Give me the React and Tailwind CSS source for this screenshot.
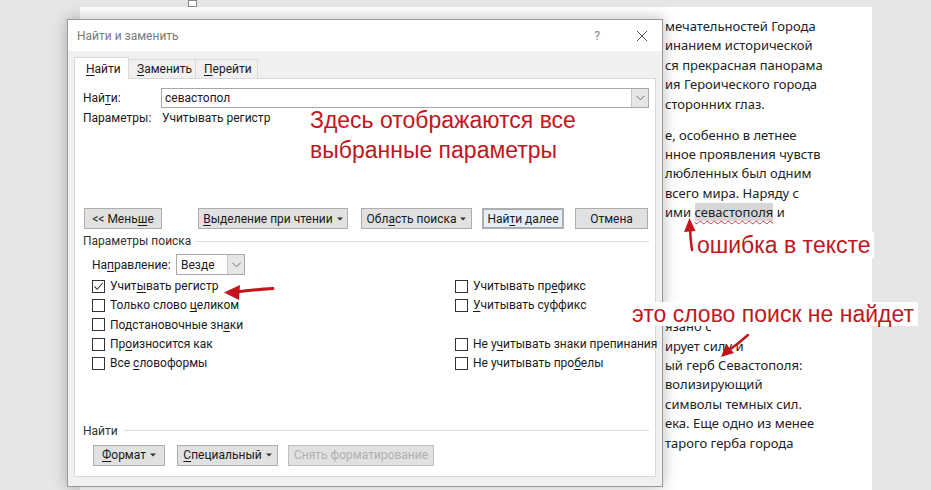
import React from "react";

// "&" marks the access-key letter that gets underlined
const K = ({ t }) => {
  const i = t.indexOf("&");
  if (i < 0) return t;
  return (
    <>
      {t.slice(0, i)}
      <span className="underline underline-offset-[2px] decoration-[1px]">{t[i + 1]}</span>
      {t.slice(i + 2)}
    </>
  );
};

const Caret = () => (
  <svg width="6" height="4" viewBox="0 0 6 4" className="ml-[4px]">
    <path d="M0 0.5 L6 0.5 L3 3.5 Z" fill="#333" />
  </svg>
);

const Chevron = () => (
  <svg width="9" height="6" viewBox="0 0 9 6">
    <path d="M0.5 0.8 L4.5 4.8 L8.5 0.8" fill="none" stroke="#6b6b6b" strokeWidth="1" />
  </svg>
);

const Btn = ({ children, className = "" }) => (
  <button
    className={`h-[21px] bg-[#e1e1e1] border border-[#adadad] text-[12px] text-[#1a1a1a] flex items-center justify-center shrink-0 whitespace-nowrap ${className}`}
  >
    {children}
  </button>
);

const Check = ({ label, checked }) => (
  <div className="h-[19.3px] flex items-center whitespace-nowrap">
    <div className="w-[13px] h-[13px] border border-[#333] bg-white flex items-center justify-center shrink-0">
      {checked && (
        <svg width="11" height="11" viewBox="0 0 11 11">
          <path d="M1.5 5.5 L4.2 8.3 L9.6 2" fill="none" stroke="#333" strokeWidth="1.1" />
        </svg>
      )}
    </div>
    <span className="ml-[5px]">
      <K t={label} />
    </span>
  </div>
);

const docText = [
  ["мечательностей Города", "инанием исторической", "ся прекрасная панорама", "ия Героического города", "сторонних глаз."],
  ["е, особенно в летнее", "нное проявления чувств", "люб­ленных был одним", "всего мира. Наряду с"],
];

const third = [
  "язано с",
  "ирует силу и",
  "ый герб Севастополя:",
  "волизирующий",
  "символы темных сил.",
  "ека. Еще одно из менее",
  "тарого герба города",
];

export default function App() {
  return (
    <div className="relative w-[931px] h-[490px] overflow-hidden bg-[#e6e6e6] font-['Noto_Sans',sans-serif]">
      {/* document page */}
      <div className="ml-[80px] mt-[7px] w-[792px] h-[483px] bg-white pl-[585px] pt-[10px] text-[13px] leading-[19.4px] text-[#222] whitespace-nowrap">
        {docText[0].map((l) => (
          <div key={l}>{l}</div>
        ))}
        <div className="mt-[11.6px]">
          {docText[1].map((l) => (
            <div key={l}>{l}</div>
          ))}
          <div>
            ими{" "}
            <span className="bg-[#d6d6d6] underline decoration-wavy decoration-[#e0303a] decoration-[1px] underline-offset-[3px]">
              севастополя
            </span>{" "}
            и
          </div>
        </div>
        <div className="mt-[94.6px]">
          {third.map((l) => (
            <div key={l}>{l}</div>
          ))}
        </div>
      </div>

      {/* sizing handle */}
      <div className="absolute left-[188px] top-0 w-[9px] h-[7px] border border-[#8a8a8a] bg-white" />

      {/* Find and replace dialog */}
      <div className="absolute left-[67px] top-[19px] w-[596px] h-[468px] bg-[#f0f0f0] border border-[#9a9a9a] shadow-[0_0_14px_rgba(0,0,0,0.28)] flex flex-col font-['Roboto',sans-serif] text-[12px] text-[#1a1a1a]">
        <div className="h-[31px] bg-white flex items-center pl-[9px] pr-[14px] shrink-0">
          <span className="text-[#7a7a7a]">Найти и заменить</span>
          <span className="ml-auto text-[#888] text-[12px]">?</span>
          <svg width="12" height="12" viewBox="0 0 12 12" className="ml-[36px]">
            <path d="M1 1 L11 11 M11 1 L1 11" stroke="#555" strokeWidth="1" />
          </svg>
        </div>

        <div className="flex-1 flex flex-col px-[6px] pt-[6px] pb-[9px]">
          {/* tabs */}
          <div className="flex items-end h-[22px] -mb-[1px] relative z-10">
            <div className="h-[22px] w-[55px] bg-white border border-b-0 border-[#d9d9d9] pl-[11px] flex items-center">
              <K t="&Найти" />
            </div>
            <div className="h-[20px] w-[67px] bg-[#f0f0f0] border border-l-0 border-[#d9d9d9] pl-[8px] flex items-center">
              <K t="&Заменить" />
            </div>
            <div className="h-[20px] w-[62px] bg-[#f0f0f0] border border-l-0 border-[#d9d9d9] pl-[8px] flex items-center">
              <K t="&Перейти" />
            </div>
          </div>

          {/* tab page */}
          <div className="flex-1 bg-white border border-[#d9d9d9] pl-[8px] pr-[6px] flex flex-col">
            <div className="mt-[9px] flex items-center h-[20px]">
              <span className="w-[78px]">
                <K t="Най&ти:" />
              </span>
              <div className="flex-1 h-[20px] border border-[#a8a8a8] flex items-center">
                <span className="pl-[3px] flex-1">севастопол</span>
                <div className="w-[17px] h-[18px] bg-[#e6e6e6] border-l border-[#c6c6c6] flex items-center justify-center">
                  <Chevron />
                </div>
              </div>
            </div>
            <div className="mt-[2px] h-[16px] flex items-center">
              <span className="w-[79px]">Параметры:</span>
              <span>Учитывать регистр</span>
            </div>

            <div className="mt-[82px] flex items-center">
              <Btn className="w-[78px] ml-[1px]">
                <K t="<< Мень&ше" />
              </Btn>
              <Btn className="w-[150px] ml-[36px]">
                <K t="&Выделение при чтении" />
                <Caret />
              </Btn>
              <Btn className="w-[111px] ml-[13px]">
                <K t="Обл&асть поиска" />
                <Caret />
              </Btn>
              <Btn className="w-[82px] ml-[10px] border-2 border-[#2a6fc0] bg-[#e5eef8]">
                <K t="Най&ти далее" />
              </Btn>
              <Btn className="w-[73px] ml-[11px]">Отмена</Btn>
            </div>

            <div className="mt-[4px] h-[16px] flex items-center">
              <span className="text-[#333]">Параметры поиска</span>
              <div className="flex-1 h-px bg-[#dcdcdc] ml-[4px]" />
            </div>

            <div className="pl-[9px]">
              <div className="mt-[5px] h-[21px] flex items-center">
                <span className="w-[84px]">
                  <K t="На&правление:" />
                </span>
                <div className="w-[69px] h-[21px] border border-[#a8a8a8] flex items-center">
                  <span className="flex-1 pl-[4px]">Везде</span>
                  <div className="w-[17px] h-[19px] bg-[#e6e6e6] border-l border-[#c6c6c6] flex items-center justify-center">
                    <Chevron />
                  </div>
                </div>
              </div>

              <div className="mt-[1.5px] grid grid-cols-[363px_1fr]">
                <div>
                  <Check label="Учит&ывать регистр" checked />
                  <Check label="Только слово &целиком" />
                  <Check label="Подстановочные зн&аки" />
                  <Check label="Пр&оизносится как" />
                  <Check label="Все &словоформы" />
                </div>
                <div>
                  <Check label="Учитывать пр&ефикс" />
                  <Check label="&Учитывать суффикс" />
                  <div className="h-[19.3px]" />
                  <Check label="Не у&читывать знаки препинания" />
                  <Check label="Не учитывать про&белы" />
                </div>
              </div>
            </div>

            <div className="mt-[50px] h-[16px] flex items-center">
              <span className="text-[#333]">Найти</span>
              <div className="flex-1 h-px bg-[#dcdcdc] ml-[6px]" />
            </div>
            <div className="mt-[6px] flex items-center pl-[10px]">
              <Btn className="w-[72px]">
                <K t="&Формат" />
                <Caret />
              </Btn>
              <Btn className="w-[101px] ml-[12px]">
                <K t="&Специальный" />
                <Caret />
              </Btn>
              <Btn className="w-[146px] ml-[10px] bg-[#d6d6d6] border-[#bfbfbf] text-[#b0b0b0]">
                Снять форматирование
              </Btn>
            </div>
          </div>
        </div>
      </div>

      {/* red annotations */}
      <div className="absolute left-[310px] top-[105px] font-['Liberation_Sans',Arial,sans-serif] text-[23px] leading-[30px] text-[#c3161c] whitespace-nowrap">
        <div>Здесь отображаются все</div>
        <div>выбранные параметры</div>
      </div>
      <div className="absolute left-[694px] top-[232px] px-[3px] bg-white font-['Liberation_Sans',Arial,sans-serif] text-[23px] leading-[26px] text-[#c3161c] whitespace-nowrap">
        ошибка в тексте
      </div>
      <div className="absolute left-[628px] top-[302px] px-[4px] bg-white font-['Liberation_Sans',Arial,sans-serif] text-[23px] leading-[24px] text-[#c3161c] whitespace-nowrap">
        это слово поиск не найдет
      </div>

      <svg className="absolute left-0 top-0 pointer-events-none" width="931" height="490" viewBox="0 0 931 490">
        <path d="M273 288.5 Q255 289.5 236 292" fill="none" stroke="#c3161c" strokeWidth="3" strokeLinecap="round" />
        <path d="M224 292.5 L240 285 L239 300 Z" fill="#c3161c" />
        <path d="M692 250 Q690.5 240 690 229" fill="none" stroke="#c3161c" strokeWidth="2.5" strokeLinecap="round" />
        <path d="M689.5 218 L684 232 L695.5 231 Z" fill="#c3161c" />
        <path d="M748 335 Q738 344 729 350" fill="none" stroke="#c3161c" strokeWidth="2.5" strokeLinecap="round" />
        <path d="M721 357 L726 344 L734 353 Z" fill="#c3161c" />
      </svg>
    </div>
  );
}
